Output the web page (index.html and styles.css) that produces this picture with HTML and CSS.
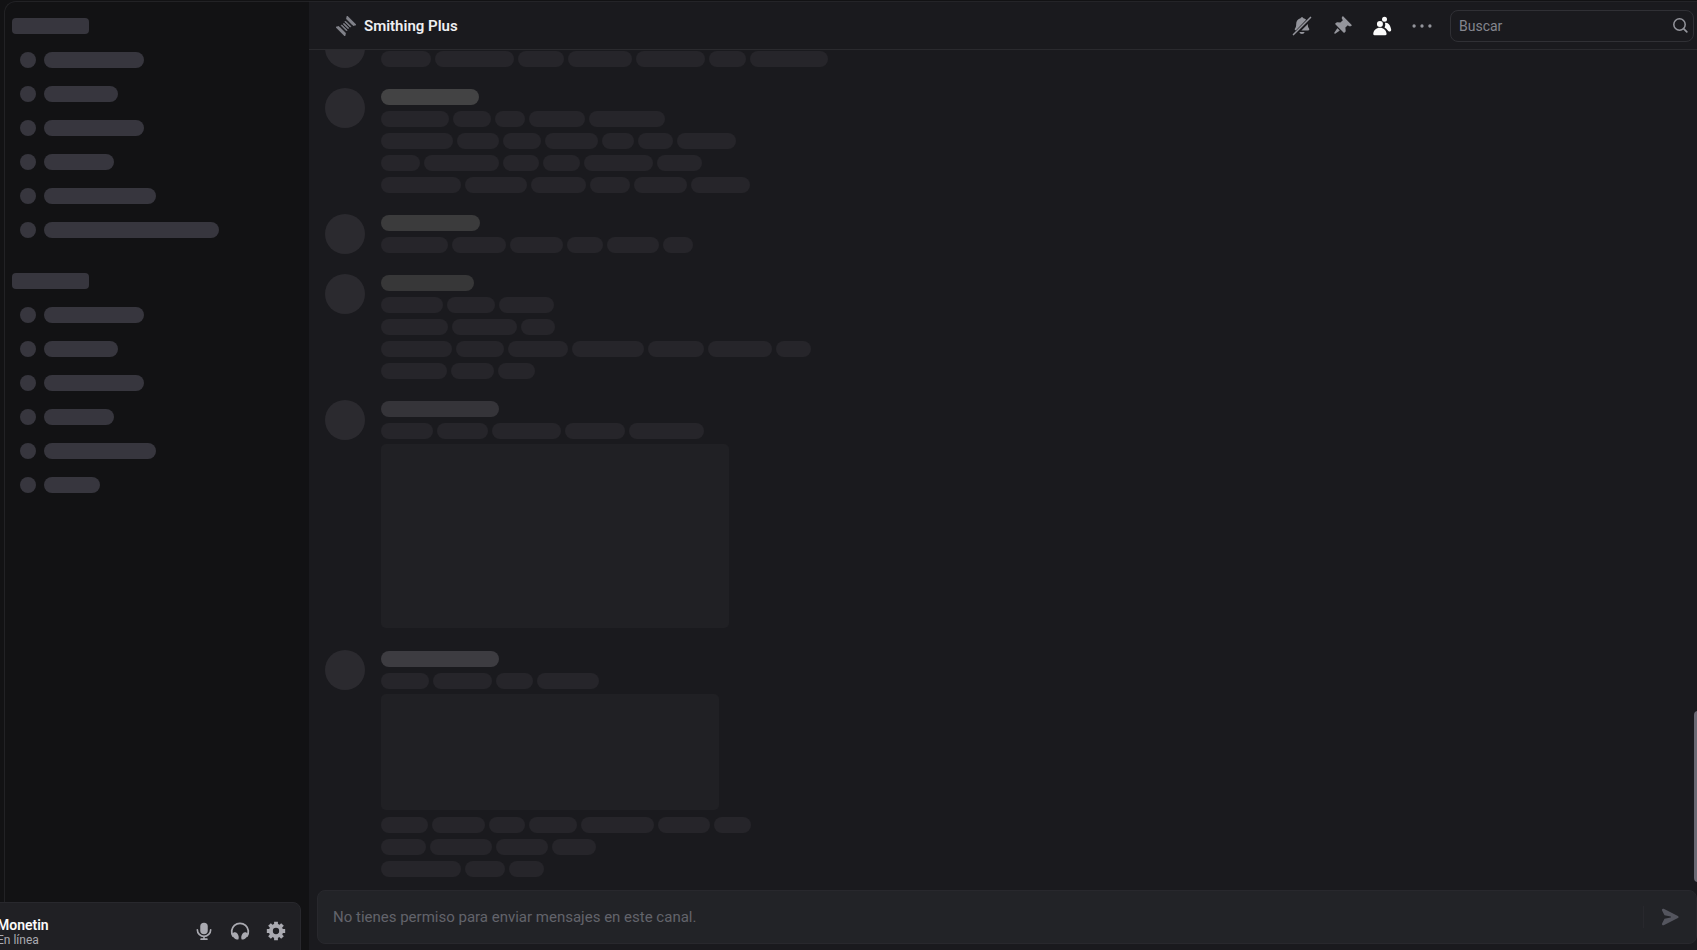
FILE: index.html
```html
<!DOCTYPE html>
<html lang="es">
<head>
<meta charset="utf-8">
<title>Smithing Plus</title>
<link rel="stylesheet" href="styles.css">
</head>
<body>
<div class="app">
  <aside class="sidebar">
    <nav class="channels" id="channels" aria-label="Canales"></nav>
    <section class="user-panel">
      <div class="user">
        <span class="user-name">Monetin</span>
        <span class="user-status">En línea</span>
      </div>
      <div class="user-actions">
        <button class="icon-button" type="button" aria-label="Silenciar">
          <svg viewBox="0 0 24 24" width="20" height="20"><rect x="7.500" y="2" width="9" height="14" rx="4.500" fill="currentColor"/><path d="M4 10.500a8 8 0 0 0 16 0M12 18.500v3M8.500 21.800h7" fill="none" stroke="currentColor" stroke-width="2" stroke-linecap="round"/></svg>
        </button>
        <button class="icon-button" type="button" aria-label="Ensordecer">
          <svg viewBox="0 0 24 24" width="20" height="20"><path d="M3.800 18.500A10 10 0 1 1 20.200 18.500" fill="none" stroke="currentColor" stroke-width="2.200"/><path d="M2.400 15.500C4 13.200 7 13 8.800 15c1.700 2 2.200 5 1.200 7.200-3.500.3-6.800-2.500-7.600-6.700ZM21.600 15.500c-1.600-2.300-4.600-2.500-6.400-.5-1.700 2-2.200 5-1.200 7.200 3.500.3 6.800-2.500 7.600-6.700Z" fill="currentColor"/></svg>
        </button>
        <button class="icon-button" type="button" aria-label="Ajustes de usuario">
          <svg viewBox="0 0 24 24" width="20" height="20"><circle cx="12" cy="12" r="6.200" fill="none" stroke="currentColor" stroke-width="4.800"/><g stroke="currentColor" stroke-width="4.600" stroke-linecap="butt"><path d="M12 1v4M12 19v4M1 12h4M19 12h4M4.200 4.200l2.800 2.800M17 17l2.800 2.800M19.800 4.200 17 7M7 17l-2.800 2.800"/></g></svg>
        </button>
      </div>
    </section>
  </aside>

  <main class="main">
    <header class="header">
      <svg class="channel-icon" viewBox="0 0 24 24" width="20" height="20"><g transform="rotate(-45 12 12)" fill="currentColor" stroke="currentColor" stroke-width="1" stroke-linejoin="round"><path d="M2.500 4.500 5.500 6.500v11l-3 2ZM21.500 4.500 18.500 6.500v11l3 2Z"/><path d="M8.300 7.500h1v9h-1ZM11.500 8h1v8h-1ZM14.700 7.500h1v9h-1Z"/></g></svg>
      <h1 class="title">Smithing Plus</h1>
      <div class="toolbar">
        <button class="icon-button" type="button" aria-label="Notificaciones silenciadas">
          <svg viewBox="0 0 24 24" width="20" height="20"><path d="M12 1.500c1 0 1.500.600 1.700 1.300 1.300.3 2.400.9 3.300 1.800L4.500 17.300c-1.200-.2-1.600-1.300-.9-2.200C4.800 13.600 5 12 5 10c0-3.700 2.100-6.500 5.300-7.200.200-.700.700-1.300 1.700-1.300ZM19 9.500v.8c0 1.900.3 3.400 1.400 4.800.8 1 .2 2.200-1.100 2.200h-8.100ZM8.800 19.200h6.400a3.300 3.300 0 0 1-6.400 0Z" fill="currentColor"/><path d="M1.800 22.200 22.200 1.800" stroke="currentColor" stroke-width="2" stroke-linecap="round"/></svg>
        </button>
        <button class="icon-button" type="button" aria-label="Mensajes fijados">
          <svg viewBox="0 0 24 24" width="20" height="20"><path fill="currentColor" d="M19.380 11.380a3 3 0 0 0 4.240 0l.03-.03a.5.5 0 0 0 0-.7L13.350.35a.5.5 0 0 0-.7 0l-.03.03a3 3 0 0 0 0 4.240L13 5l-2.920 2.920-3.650-.34a2 2 0 0 0-1.600.58l-.62.63a1 1 0 0 0 0 1.420l9.580 9.580a1 1 0 0 0 1.420 0l.63-.63a2 2 0 0 0 .58-1.600l-.34-3.640L19 11l.38.38ZM9.070 17.070a.5.5 0 0 1-.08.77l-5.150 3.430a.5.5 0 0 1-.63-.06l-.42-.42a.5.5 0 0 1-.06-.63L6.160 15a.5.5 0 0 1 .77-.08l2.140 2.140Z"/></svg>
        </button>
        <button class="icon-button is-active" type="button" aria-label="Mostrar lista de miembros">
          <svg viewBox="0 0 24 24" width="20" height="20" fill="currentColor"><circle cx="15" cy="4" r="3"/><circle cx="9.500" cy="9.500" r="3.600"/><path d="M15.500 8.200c3.800-1 6.800 3 7.500 8 .2 1.600-.5 2.400-1.500 2.400-1.400 0-2-.4-2.800-1.500-.8-1.300-2-2.400-3.700-3.200 1-1.800 1.200-3.900.5-5.700ZM9.500 14.200c4.400 0 7.500 3 8 7.200.1.900-.5 1.600-1.400 1.600H2.900c-.9 0-1.500-.7-1.400-1.600.5-4.200 3.600-7.200 8-7.200Z"/></svg>
        </button>
        <button class="icon-button" type="button" aria-label="Más">
          <svg viewBox="0 0 24 24" width="20" height="20" fill="currentColor"><circle cx="2.500" cy="12" r="2"/><circle cx="12" cy="12" r="2"/><circle cx="21.500" cy="12" r="2"/></svg>
        </button>
        <label class="search">
          <input class="search-input" type="search" placeholder="Buscar" aria-label="Buscar">
          <svg viewBox="0 0 16 16" width="16" height="16" fill="none" stroke="currentColor" stroke-linecap="round"><circle cx="7.500" cy="6.500" r="5.700" stroke-width="1.500"/><path d="m11.800 10.800 3 3" stroke-width="1.700"/></svg>
        </label>
      </div>
    </header>

    <div class="viewport">
      <div class="messages" id="messages"></div>
      <div class="scroll-thumb"></div>
    </div>

    <form class="composer">
      <input class="composer-input" type="text" placeholder="No tienes permiso para enviar mensajes en este canal." aria-label="Mensaje" disabled>
      <button class="send" type="button" aria-label="Enviar mensaje" disabled>
        <svg viewBox="0 0 24 24" width="20" height="20"><path fill="currentColor" d="M6.600 10.020 14 11.400a.6.600 0 0 1 0 1.180L6.600 14l-2.940 5.870a1.480 1.480 0 0 0 1.990 1.980l17.030-8.520a1.480 1.480 0 0 0 0-2.640L5.650 2.160a1.480 1.480 0 0 0-1.990 1.980l2.940 5.880Z"/></svg>
      </button>
    </form>
  </main>
</div>
<script src="skeleton.js"></script>
</body>
</html>
```

FILE: styles.css
```css
* {
  box-sizing: border-box;
}

body {
  margin: 0;
  background: #121214;
  color: #94959c;
  font-family: Roboto, "Noto Sans", sans-serif;
}

button,
input {
  margin: 0;
  padding: 0;
  border: 0;
  background: none;
  color: inherit;
  font: inherit;
  outline: 0;
}

svg {
  display: block;
  flex: none;
}

.app {
  display: grid;
  grid-template-columns: 309px minmax(0, 1fr);
  height: 100vh;
  padding-top: 1px;
  overflow: hidden;
}

/* Channel list */
.sidebar {
  display: flex;
  flex-direction: column;
  min-height: 0;
}

.channels {
  flex: 1;
  min-height: 0;
  margin-left: 4px;
  padding: 16px 7px 0;
  border: solid #222225;
  border-width: 1px 0 0 1px;
  border-top-left-radius: 12px;
  overflow: hidden;
}

.group {
  display: flex;
  flex-direction: column;
  gap: 18px;
  margin-bottom: 35px;
}

.group-title {
  width: 77px;
  height: 16px;
  border-radius: 4px;
  background: #37363e;
}

.channel {
  display: flex;
  gap: 8px;
  padding-left: 8px;
}

.dot,
.channel-name {
  height: 16px;
  border-radius: 8px;
  background: #37363e;
}

.dot {
  width: 16px;
}

.user-panel {
  display: flex;
  align-items: center;
  justify-content: space-between;
  height: 58px;
  margin: 0 8px -10px -4px;
  padding-right: 14px;
  border: 1px solid #28282d;
  border-top-right-radius: 8px;
  background: #202024;
}

.user {
  display: flex;
  flex-direction: column;
  padding-top: 2px;
}

.user-name {
  color: #fbfbfb;
  font-size: 14px;
  font-weight: 600;
  line-height: 16px;
}

.user-status {
  color: #aaaab1;
  font-size: 12px;
  line-height: 14px;
}

.user-actions {
  display: flex;
  gap: 16px;
  color: #aaaab1;
}

.icon-button {
  display: grid;
  place-items: center;
  width: 20px;
  height: 20px;
  cursor: pointer;
}

.is-active {
  color: #fbfbfb;
}

/* Conversation */
.main {
  display: flex;
  flex-direction: column;
  min-width: 0;
  min-height: 0;
  padding-bottom: 6px;
  border-top: 1px solid #242428;
  background: #1a1a1e;
}

.header {
  display: flex;
  align-items: center;
  flex: none;
  height: 48px;
  padding: 0 3px 0 27px;
  border-bottom: 1px solid #2a2a2e;
}

.channel-icon {
  color: #81828a;
}

.title {
  flex: 1;
  margin: 0;
  padding-left: 8px;
  color: #efeff1;
  font-size: 15px;
  font-weight: 600;
  line-height: 20px;
}

.toolbar {
  display: flex;
  align-items: center;
  gap: 20px;
}

.search {
  display: flex;
  align-items: center;
  width: 244px;
  height: 32px;
  margin-left: -2px;
  padding: 0 5px 0 8px;
  border: 1px solid #303035;
  border-radius: 8px;
}

.search-input {
  flex: 1;
  min-width: 0;
  font-size: 14px;
  line-height: 20px;
}

.search-input::placeholder {
  color: #85868e;
  opacity: 1;
}

.viewport {
  position: relative;
  display: flex;
  flex: 1;
  flex-direction: column;
  justify-content: flex-end;
  min-height: 0;
  overflow: hidden;
}

.messages {
  display: flex;
  flex: none;
  flex-direction: column;
  gap: 16px;
  padding: 0 16px 10px;
}

.scroll-thumb {
  position: absolute;
  right: -5px;
  bottom: 8px;
  width: 8px;
  height: 171px;
  border-radius: 4px;
  background: #6a6973;
}

.message {
  display: flex;
  gap: 16px;
}

.avatar {
  flex: none;
  width: 40px;
  height: 40px;
  margin-top: 2px;
  border-radius: 50%;
  background: #2b2a2f;
}

.line {
  display: flex;
  gap: 4px;
  padding: 3px 0;
}

.author,
.word {
  height: 16px;
  border-radius: 8px;
}

.word {
  background: #26252a;
}

.tone-1 { background: #434344; }
.tone-2 { background: #3b3b3c; }
.tone-3 { background: #373738; }
.tone-4 { background: #353439; }
.tone-5 { background: #3d3c41; }

.attachment {
  margin: 2px 0 4px;
  border-radius: 5px;
  background: #202024;
}

.composer {
  display: flex;
  align-items: center;
  flex: none;
  height: 54px;
  margin-left: 8px;
  padding: 0 17px 0 15px;
  border: 1px solid #28282d;
  border-radius: 8px;
  background: #222327;
}

.composer-input {
  flex: 1;
  min-width: 0;
  font-size: 15px;
  line-height: 22px;
}

.composer-input::placeholder {
  color: #62636b;
  opacity: 1;
}

.send {
  padding: 1px 0 1px 15px;
  border-left: 1px solid #28282d;
  color: #54555e;
}
```

FILE: skeleton.js
```js
const channelGroups = [
  [100, 74, 100, 70, 112, 175],
  [100, 74, 100, 70, 112, 56],
];

const messages = [
  { author: 98, tone: 1, body: [[50, 79, 46, 64, 69, 37, 78]] },
  { author: 98, tone: 1, body: [
    [68, 38, 30, 56, 76],
    [72, 42, 38, 53, 32, 35, 59],
    [39, 75, 36, 37, 69, 45],
    [80, 62, 55, 40, 53, 59],
  ] },
  { author: 99, tone: 2, body: [[67, 54, 53, 36, 52, 30]] },
  { author: 93, tone: 3, body: [
    [62, 48, 55],
    [67, 65, 34],
    [71, 48, 60, 72, 56, 64, 35],
    [66, 43, 37],
  ] },
  { author: 118, tone: 4, body: [
    [52, 51, 69, 60, 75],
    { width: 348, height: 184 },
  ] },
  { author: 118, tone: 5, body: [
    [48, 59, 37, 62],
    { width: 338, height: 116 },
    [47, 53, 36, 48, 73, 52, 37],
    [45, 62, 52, 44],
    [80, 40, 35],
  ] },
];

const bar = (name, width) => `<div class="${name}" style="width:${width}px"></div>`;

document.getElementById("channels").innerHTML = channelGroups.map((widths) =>
  `<div class="group"><div class="group-title"></div>${widths.map((width) =>
    `<div class="channel"><div class="dot"></div>${bar("channel-name", width)}</div>`
  ).join("")}</div>`
).join("");

const block = (part) => Array.isArray(part)
  ? `<div class="line">${part.map((width) => bar("word", width)).join("")}</div>`
  : `<div class="attachment" style="width:${part.width}px;height:${part.height}px"></div>`;

document.getElementById("messages").innerHTML = messages.map(({ author, tone, body }) =>
  `<div class="message"><div class="avatar"></div><div class="content">
    <div class="line">${bar(`author tone-${tone}`, author)}</div>${body.map(block).join("")}
  </div></div>`
).join("");
```
